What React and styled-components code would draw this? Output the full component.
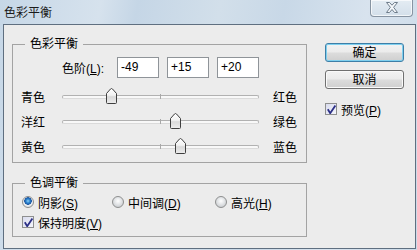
import React from "react";
import styled, { createGlobalStyle } from "styled-components";

const GlobalStyle = createGlobalStyle`
  body {
    margin: 0;
    background: #ffffff;
  }
  * {
    box-sizing: border-box;
  }
`;

const FONT = `"Liberation Sans", "Noto Sans CJK SC", sans-serif`;

const sliders = [
  { left: "青色", right: "红色", value: -49 },
  { left: "洋红", right: "绿色", value: 15 },
  { left: "黄色", right: "蓝色", value: 20 },
];

function App() {
  return (
    <>
      <GlobalStyle />
      <Window>
        <TitleBar>
          <Title>色彩平衡</Title>
          <CloseButton>
            <svg width="14" height="11" viewBox="0 0 14 11">
              <path
                d="M1.5 0.5 H4.5 L7 3.2 L9.5 0.5 H12.5 L8.6 5.3 L12.5 10.5 H9.5 L7 7.5 L4.5 10.5 H1.5 L5.4 5.3 Z"
                fill="#f5f8fb"
                stroke="#6f7d8b"
                strokeWidth="1"
                strokeLinejoin="round"
              />
            </svg>
          </CloseButton>
        </TitleBar>
        <Client>
          <LeftColumn>
            <Group>
              <Legend>色彩平衡</Legend>
              <BalanceBody>
                <LevelRow>
                  <LevelLabel>
                    色阶(<Key>L</Key>):
                  </LevelLabel>
                  <NumberBox>-49</NumberBox>
                  <NumberBox>+15</NumberBox>
                  <NumberBox>+20</NumberBox>
                </LevelRow>
                {sliders.map((s) => (
                  <SliderRow key={s.left}>
                    <SideLabel>{s.left}</SideLabel>
                    <TrackArea>
                      <Track />
                      <Tick />
                      <Thumb style={{ left: 98.5 + s.value - 5.5 }}>
                        <svg width="11" height="16" viewBox="0 0 11 16">
                          <defs>
                            <linearGradient id={`g${s.left}`} x1="0" y1="0" x2="0" y2="1">
                              <stop offset="0" stopColor="#ffffff" />
                              <stop offset="0.45" stopColor="#f2f2f2" />
                              <stop offset="0.55" stopColor="#d9d9d9" />
                              <stop offset="1" stopColor="#ededed" />
                            </linearGradient>
                          </defs>
                          <path
                            d="M0.5 5.5 L4.5 1 Q5.5 0 6.5 1 L10.5 5.5 V14.5 Q10.5 15.5 9.5 15.5 H1.5 Q0.5 15.5 0.5 14.5 Z"
                            fill={`url(#g${s.left})`}
                            stroke="#3f3f3f"
                            strokeWidth="1"
                          />
                        </svg>
                      </Thumb>
                    </TrackArea>
                    <RightLabel>{s.right}</RightLabel>
                  </SliderRow>
                ))}
              </BalanceBody>
            </Group>
            <Group $spaced>
              <Legend>色调平衡</Legend>
              <ToneBody>
                <RadioRow>
                  <Option>
                    <Radio $on />
                    <span>
                      阴影(<Key>S</Key>)
                    </span>
                  </Option>
                  <Option>
                    <Radio />
                    <span>
                      中间调(<Key>D</Key>)
                    </span>
                  </Option>
                  <Option>
                    <Radio />
                    <span>
                      高光(<Key>H</Key>)
                    </span>
                  </Option>
                </RadioRow>
                <Option>
                  <CheckBox />
                  <span>
                    保持明度(<Key>V</Key>)
                  </span>
                </Option>
              </ToneBody>
            </Group>
          </LeftColumn>
          <RightColumn>
            <DialogButton $primary>确定</DialogButton>
            <DialogButton>取消</DialogButton>
            <PreviewRow>
              <CheckBox />
              <span>
                预览(<Key>P</Key>)
              </span>
            </PreviewRow>
          </RightColumn>
        </Client>
      </Window>
    </>
  );
}

function CheckBox() {
  return (
    <Box>
      <svg width="9" height="9" viewBox="0 0 9 9">
        <path
          d="M0.8 4.2 L3.2 8.2 L8.4 0.6"
          fill="none"
          stroke="#2c2f86"
          strokeWidth="1.8"
        />
      </svg>
    </Box>
  );
}

export default App;

const Window = styled.div`
  width: 417px;
  height: 250px;
  display: flex;
  flex-direction: column;
  font-family: ${FONT};
  font-size: 12px;
  color: #000;
  background: linear-gradient(
    100deg,
    #c6d7e7 0%,
    #d6e2ed 22%,
    #c5d6e6 30%,
    #d2dfea 48%,
    #c8d8e7 62%,
    #d8e3ee 80%,
    #cbdae8 100%
  );
`;

const TitleBar = styled.div`
  height: 24px;
  display: flex;
  justify-content: space-between;
  align-items: flex-start;
  padding: 0 4px 0 4px;
`;

const Title = styled.div`
  font-size: 12px;
  line-height: 14px;
  margin-top: 6px;
  color: #1b1b1b;
`;

const CloseButton = styled.div`
  width: 43px;
  height: 17px;
  display: flex;
  align-items: center;
  justify-content: center;
  padding-bottom: 1px;
  border: 1px solid #8794a2;
  border-top: none;
  border-radius: 0 0 4px 4px;
  background: linear-gradient(#e4ecf3, #d3dfea);
  box-shadow: inset 0 0 0 1px rgba(255, 255, 255, 0.7);
`;

const Client = styled.div`
  flex: 1;
  margin: 0 1px 1px 3px;
  border: 1px solid #5f6f80;
  background: #ececec;
  display: flex;
  gap: 18px;
  padding-left: 8px;
`;

const LeftColumn = styled.div`
  width: 295px;
  padding-top: 12px;
`;

const Group = styled.fieldset`
  margin: ${(p) => (p.$spaced ? "13px 0 0 0" : "0")};
  padding: 0;
  min-width: 0;
  border: 1px solid #a3a3a3;
`;

const Legend = styled.legend`
  margin-left: 12px;
  padding: 0 5px;
  line-height: 14px;
  font-size: 12px;
`;

const BalanceBody = styled.div`
  padding: 6px 8px 3px 8px;
`;

const LevelRow = styled.div`
  display: flex;
  align-items: center;
  gap: 8px;
  height: 21px;
  padding-left: 41px;
  margin-bottom: 6px;
`;

const LevelLabel = styled.span`
  width: 47px;
`;

const Key = styled.span`
  text-decoration: underline;
`;

const NumberBox = styled.div`
  width: 42px;
  height: 21px;
  background: #fff;
  border: 1px solid #8f9499;
  padding-left: 3px;
  line-height: 19px;
`;

const SliderRow = styled.div`
  display: flex;
  align-items: center;
  height: 25px;
`;

const SideLabel = styled.span`
  width: 41px;
`;

const RightLabel = styled.span`
  margin-left: 14px;
`;

const TrackArea = styled.div`
  position: relative;
  width: 197px;
  height: 25px;
  display: flex;
  align-items: center;
`;

const Track = styled.div`
  width: 100%;
  height: 4px;
  border: 1px solid #b1b1b1;
  border-bottom-color: #dadada;
  border-radius: 2px;
  background: #f8f8f8;
`;

const Tick = styled.div`
  position: absolute;
  left: 98px;
  top: 10px;
  width: 1px;
  height: 5px;
  background: #a8a8a8;
`;

const Thumb = styled.div`
  position: absolute;
  top: 4px;
  width: 11px;
  height: 16px;
  display: flex;
`;

const ToneBody = styled.div`
  padding: 4px 8px 6px 9px;
  display: flex;
  flex-direction: column;
  gap: 4px;
`;

const RadioRow = styled.div`
  display: grid;
  grid-template-columns: 90px 103px auto;
  height: 16px;
`;

const Option = styled.label`
  display: flex;
  align-items: center;
  gap: 3px;
  height: 16px;
  white-space: nowrap;
`;

const Radio = styled.span`
  width: 12px;
  height: 12px;
  border-radius: 50%;
  border: 1px solid #8e8f8f;
  background: ${(p) =>
    p.$on
      ? "radial-gradient(circle at 50% 40%, #8fd0f5 0, #2b83cf 2px, #1a55a0 3.5px, #eef1f4 4px, #dfe3e6 6px)"
      : "radial-gradient(circle at 50% 40%, #ffffff 0, #e6e8ea 3px, #cdd0d3 6px)"};
  margin-right: 1px;
`;

const Box = styled.span`
  width: 12px;
  height: 12px;
  border: 1px solid #8e8f8f;
  background: linear-gradient(135deg, #d9dcee, #f4f5fb);
  display: flex;
  align-items: center;
  justify-content: center;
  margin-right: 1px;
`;

const RightColumn = styled.div`
  width: 79px;
  padding-top: 18px;
  display: flex;
  flex-direction: column;
  gap: 8px;
`;

const DialogButton = styled.div`
  width: 79px;
  height: 19px;
  display: flex;
  align-items: center;
  justify-content: center;
  line-height: 14px;
  border-radius: 3px;
  border: 1px solid ${(p) => (p.$primary ? "#3d7fa8" : "#707070")};
  background: linear-gradient(#f3f3f3 0%, #ebebeb 48%, #dcdcdc 52%, #cfcfcf 100%);
  box-shadow: ${(p) =>
    p.$primary ? "inset 0 0 0 1px #7fd0ef" : "inset 0 0 0 1px #fafafa"};
`;

const PreviewRow = styled(Option)`
  margin-top: 4px;
`;
